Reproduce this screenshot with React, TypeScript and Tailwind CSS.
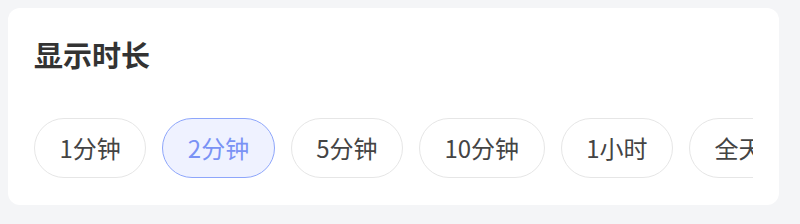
import { useState } from "react";

const options = ["1分钟", "2分钟", "5分钟", "10分钟", "1小时", "全天"];

export default function App() {
  const [active, setActive] = useState("2分钟");

  return (
    <div
      className="h-[224px] w-[800px] bg-[#f4f5f7] pt-2 pl-2"
      style={{ fontFamily: '"Noto Sans CJK SC", "Noto Sans", sans-serif' }}
    >
      <div className="w-[771px] h-[197px] rounded-xl bg-white px-[26px] pt-[28px]">
        <h2 className="text-[29px] leading-[36px] font-bold text-[#333333]">显示时长</h2>

        {/* Duration chips */}
        <div className="mt-[46px] flex gap-4 overflow-hidden">
          {options.map((opt) => (
            <button
              key={opt}
              onClick={() => setActive(opt)}
              className={`h-[60px] shrink-0 rounded-full border px-[24.5px] text-[24px] leading-none ${
                active === opt
                  ? "border-[#8ea6fb] bg-[#eff2ff] text-[#7a92f5]"
                  : "border-[#e6e6e6] bg-white text-[#444444]"
              }`}
            >
              {opt}
            </button>
          ))}
        </div>
      </div>
    </div>
  );
}
